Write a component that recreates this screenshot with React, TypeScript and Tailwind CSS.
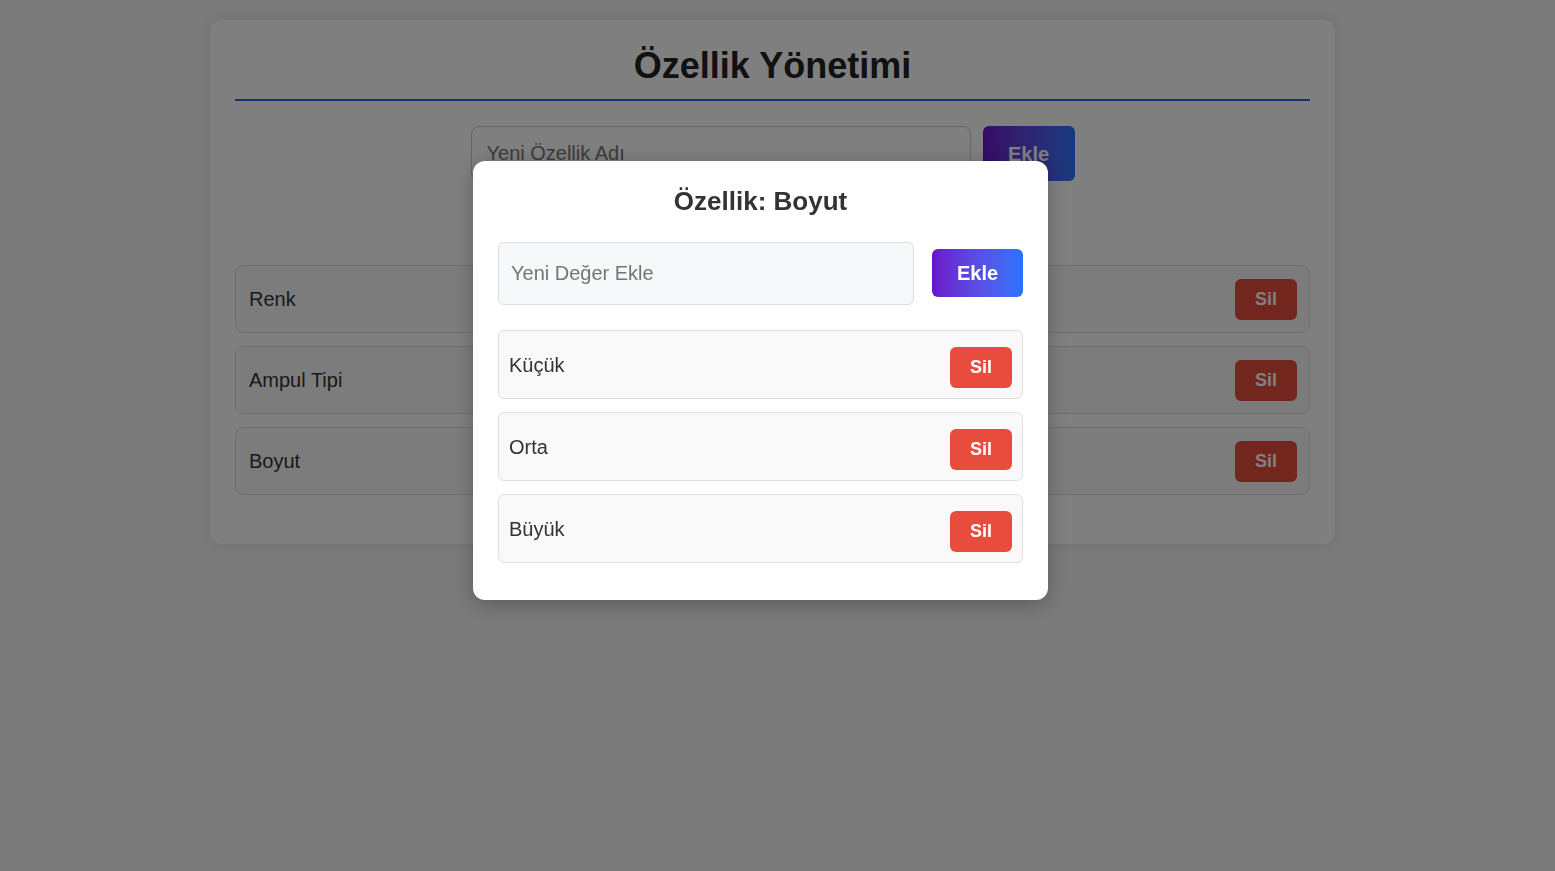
import React from "react";

const font = { fontFamily: '"Liberation Sans", Arial, sans-serif' };

function Row({ label }: { label: string }) {
  return (
    <div className="flex h-[68px] items-center justify-between rounded-lg border border-[#dddddd] bg-[#f9f9f9] pl-[13px] pr-[12px]">
      <span className="text-[20px] text-[#333]">{label}</span>
      <button className="h-[41px] w-[62px] rounded-md bg-[#e74c3c] text-[18px] font-bold text-white">Sil</button>
    </div>
  );
}

function ModalRow({ label }: { label: string }) {
  return (
    <div className="flex h-[69px] items-center justify-between rounded-md border border-[#e0e0e0] bg-[#f9f9f9] pl-[10px] pr-[10px]">
      <span className="text-[20px] text-[#333]">{label}</span>
      <button className="mt-[6px] h-[41px] w-[62px] rounded-md bg-[#e74c3c] text-[18px] font-bold text-white">Sil</button>
    </div>
  );
}

export default function App() {
  return (
    <div style={font} className="relative min-h-[871px] bg-[#f4f4f6] pt-[20px]">
      <div className="ml-[210px] w-[1125px] rounded-xl bg-white px-[25px] pt-[25px] pb-[49px] shadow-[0_0_12px_rgba(0,0,0,0.08)]">
        <h1 className="border-b-2 border-[#2a66d8] pb-[12px] text-center text-[36px] font-bold leading-[42px] text-[#222]">
          Özellik Yönetimi
        </h1>
        <div className="mt-[25px] flex justify-center gap-[12px]">
          <input
            placeholder="Yeni Özellik Adı"
            className="h-[55px] w-[500px] rounded-lg border border-[#cccccc] bg-white px-[15px] text-[20px] placeholder:text-[#777]"
          />
          <button className="h-[55px] w-[92px] rounded-md bg-gradient-to-r from-[#6a11cb] to-[#2575fc] text-[20px] font-bold text-white">
            Ekle
          </button>
        </div>
        <div className="mt-[84px] flex flex-col gap-[13px]">
          <Row label="Renk" />
          <Row label="Ampul Tipi" />
          <Row label="Boyut" />
        </div>
      </div>

      <div className="fixed inset-0 bg-black/50">
        <div className="absolute left-[473px] top-[161px] w-[575px] rounded-xl bg-white px-[25px] pt-[24px] pb-[37px] shadow-[0_4px_20px_rgba(0,0,0,0.25)]">
          <h2 className="text-center text-[26px] font-bold leading-[32px] text-[#333]">Özellik: Boyut</h2>
          <div className="mt-[25px] flex items-center gap-[18px]">
            <input
              placeholder="Yeni Değer Ekle"
              className="h-[63px] flex-1 rounded-md border border-[#dddddd] bg-[#f7f8fa] px-[12px] text-[20px] placeholder:text-[#757575]"
            />
            <button className="mb-[2px] h-[48px] w-[91px] rounded-md bg-gradient-to-r from-[#6a11cb] to-[#2575fc] text-[20px] font-bold text-white">
              Ekle
            </button>
          </div>
          <div className="mt-[25px] flex flex-col gap-[13px]">
            <ModalRow label="Küçük" />
            <ModalRow label="Orta" />
            <ModalRow label="Büyük" />
          </div>
        </div>
      </div>
    </div>
  );
}
